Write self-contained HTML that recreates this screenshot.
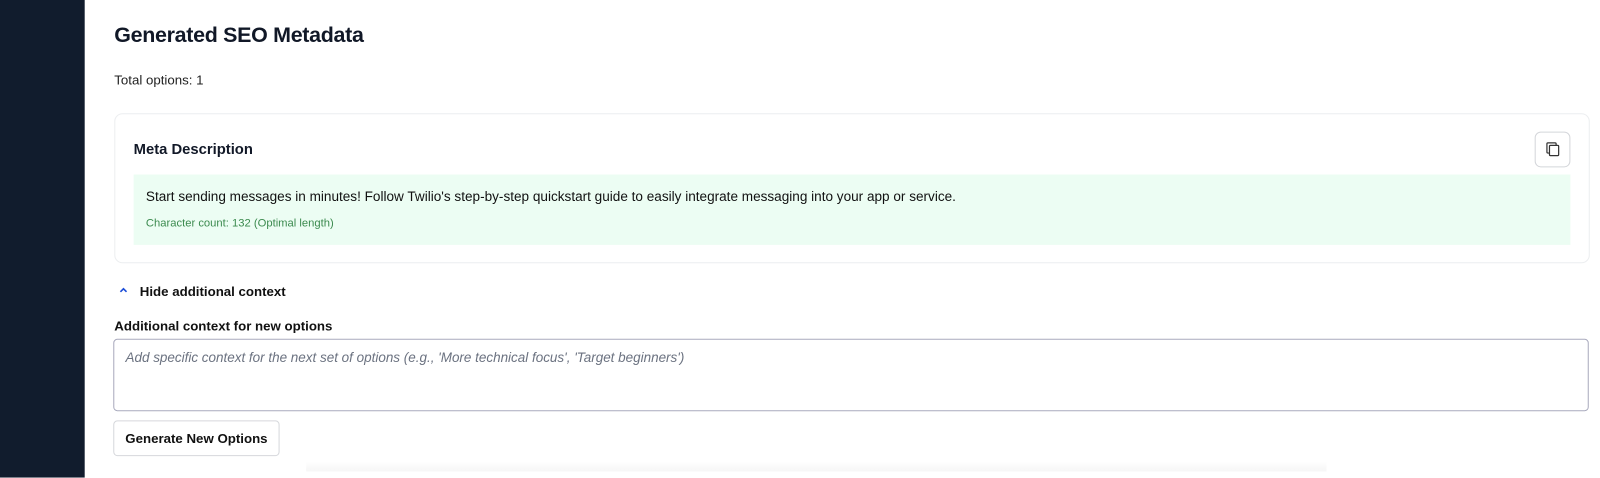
<!DOCTYPE html>
<html><head><meta charset="utf-8"><style>
*{box-sizing:border-box;margin:0;padding:0}
body{width:1600px;height:468px;overflow:hidden;background:#fff;font-family:"Liberation Sans",sans-serif;color:#111;position:relative}
.wrap{position:absolute;left:0;top:0;width:1568px;height:459px;transform:scale(1.0204);transform-origin:0 0}
.side{position:absolute;left:0;top:0;width:83px;height:468px;background:#111c2d}
h1{position:absolute;left:112px;top:23px;font-size:21px;font-weight:700;color:#111827;letter-spacing:-0.3px}
.total{position:absolute;left:112px;top:71px;font-size:13px;color:#222}
.card{position:absolute;left:112px;top:111px;width:1446px;height:147px;border:1px solid #eceef0;border-radius:8px}
.card h2{position:absolute;left:18px;top:27px;font-size:14.5px;font-weight:700;color:#111827}
.copy{position:absolute;left:1391px;top:17px;width:35px;height:35px;border:1px solid #d4d6da;border-radius:6px}
.green{position:absolute;left:18px;top:59px;width:1408px;height:69px;background:#ecfdf3}
.green p{position:absolute;left:12px;top:14px;font-size:13.3px;color:#111}
.green small{position:absolute;left:12px;top:42px;font-size:11px;color:#3b8a4e}
.hide{position:absolute;left:137px;top:278px;font-size:13px;font-weight:700;color:#111}
.chev{position:absolute;left:116px;top:280px}
.lbl{position:absolute;left:112px;top:312px;font-size:13px;font-weight:700;color:#111}
.ta{position:absolute;left:111px;top:332px;width:1446px;height:71px;border:1px solid #a9aabd;border-radius:4px}
.ta p{position:absolute;left:11px;top:10px;font-size:13.2px;font-style:italic;color:#6b7280}
.btn{position:absolute;left:111px;top:412px;width:163px;height:35px;border:1px solid #d6d8dc;border-radius:4px;font-size:13px;font-weight:700;color:#111;text-align:center;line-height:33px}
.shade{position:absolute;left:300px;top:452px;width:1000px;height:10px;background:linear-gradient(#fff,#f6f6f6)}
</style></head><body><div class="wrap">
<div class="side"></div>
<div class="shade"></div>
<h1>Generated SEO Metadata</h1>
<div class="total">Total options: 1</div>
<div class="card">
<h2>Meta Description</h2>
<div class="copy"><svg width="35" height="35" viewBox="0 0 35 35"><rect x="11" y="10" width="9" height="10" rx="1" fill="none" stroke="#333" stroke-width="1.2"/><rect x="13.5" y="12.5" width="9" height="10" rx="1" fill="#fff" stroke="#333" stroke-width="1.2"/></svg></div>
<div class="green"><p>Start sending messages in minutes! Follow Twilio's step-by-step quickstart guide to easily integrate messaging into your app or service.</p><small>Character count: 132 (Optimal length)</small></div>
</div>
<svg class="chev" width="10" height="8" viewBox="0 0 10 8"><path d="M2 6 L5 3 L8 6" fill="none" stroke="#1d4ed8" stroke-width="1.6"/></svg>
<div class="hide">Hide additional context</div>
<div class="lbl">Additional context for new options</div>
<div class="ta"><p>Add specific context for the next set of options (e.g., 'More technical focus', 'Target beginners')</p></div>
<div class="btn">Generate New Options</div>
</div></body></html>
